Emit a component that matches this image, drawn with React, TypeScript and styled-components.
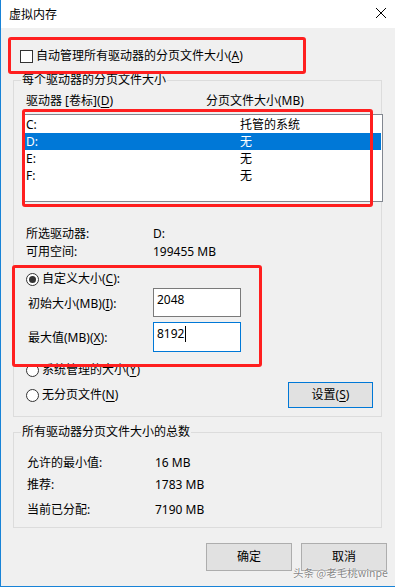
import React from "react";
import styled, { createGlobalStyle } from "styled-components";

const Global = createGlobalStyle`
  html, body { margin: 0; padding: 0; background: #ffffff; }
  body {
    font-family: "Noto Sans", "Noto Sans CJK SC", sans-serif;
    font-size: 12px;
    line-height: 16px;
    color: #000;
  }
  * { box-sizing: border-box; }
`;

const Window = styled.div`
  position: relative;
  width: 395px;
  height: 587px;
  border-left: 1px solid #1883d7;
  border-bottom: 1px solid #1883d7;
  background: #f0f0f0;
  display: flex;
  flex-direction: column;
  overflow: hidden;
`;

const TitleBar = styled.div`
  height: 28px;
  background: #fff;
  display: flex;
  align-items: center;
  justify-content: space-between;
  padding: 0 8px 0 8px;
  flex-shrink: 0;
`;

const Title = styled.span`
  font-family: "Noto Sans CJK SC", sans-serif;
  font-size: 12px;
  line-height: 16px;
`;

const Close = styled.svg`
  width: 12px;
  height: 12px;
  margin-top: -2px;
`;

const Body = styled.div`
  display: flex;
  flex-direction: column;
  padding: 20px 0 0 12px;
  flex: 1;
`;

const CheckRow = styled.label`
  display: flex;
  align-items: center;
  height: 16px;
  padding-left: 7px;
  gap: 3px;
`;

const CheckBox = styled.span`
  width: 13px;
  height: 13px;
  border: 1px solid #333;
  background: #fff;
  display: inline-block;
  flex-shrink: 0;
`;

const Group = styled.fieldset<{ $mt: number }>`
  margin: ${(p) => p.$mt}px 0 0 0;
  width: 369px;
  border: 1px solid #dcdcdc;
  padding: 0 8px 8px 8px;
  min-width: 0;
`;

const Legend = styled.legend`
  padding: 0 1px;
  margin-left: -1px;
  line-height: 16px;
  height: 16px;
`;

const HeaderRow = styled.div`
  display: grid;
  grid-template-columns: 180px 1fr;
  padding-left: 4px;
  margin-top: 5px;
  height: 16px;
`;

const ListBox = styled.div`
  margin: 5px 0 0 2px;
  width: 359px;
  height: 88px;
  border: 1px solid #828790;
  background: #fff;
  padding: 1px 1px 0 0;
`;

const ListRow = styled.div<{ $sel?: boolean }>`
  display: grid;
  grid-template-columns: 214px 1fr;
  height: 17px;
  align-items: center;
  padding-left: 1px;
  background: ${(p) => (p.$sel ? "#0078d7" : "transparent")};
  color: ${(p) => (p.$sel ? "#fff" : "#000")};
`;

const InfoRow = styled.div<{ $mt?: number; $pl?: number; $col?: number }>`
  display: grid;
  grid-template-columns: ${(p) => p.$col ?? 127}px 1fr;
  height: 18px;
  align-items: center;
  padding-left: ${(p) => p.$pl ?? 4}px;
  margin-top: ${(p) => p.$mt ?? 0}px;
`;

const RadioRow = styled.div<{ $mt?: number }>`
  display: flex;
  align-items: center;
  gap: 3px;
  height: 16px;
  padding-left: 4px;
  margin-top: ${(p) => p.$mt ?? 0}px;
`;

const Radio = styled.span<{ $on?: boolean }>`
  width: 13px;
  height: 13px;
  border-radius: 50%;
  border: 1px solid #333;
  background: #fff;
  display: inline-flex;
  align-items: center;
  justify-content: center;
  flex-shrink: 0;
  &::after {
    content: "";
    width: 7px;
    height: 7px;
    border-radius: 50%;
    background: ${(p) => (p.$on ? "#333" : "transparent")};
  }
`;

const FieldRow = styled.div<{ $mt?: number }>`
  display: grid;
  grid-template-columns: 125px 88px;
  align-items: center;
  padding-left: 6px;
  margin-top: ${(p) => p.$mt ?? 0}px;
`;

const FieldLabel = styled.span`
  margin-top: 2px;
`;

const TextBox = styled.div<{ $focus?: boolean; $h: number }>`
  height: ${(p) => p.$h}px;
  border: 1px solid ${(p) => (p.$focus ? "#0078d7" : "#7a7a7a")};
  background: #fff;
  padding: 3px 0 0 3px;
  display: flex;
  align-items: flex-start;
`;

const Caret = styled.span`
  display: inline-block;
  width: 1px;
  height: 16px;
  background: #000;
  margin-left: 1px;
`;

const BottomRow = styled.div`
  display: flex;
  align-items: center;
  justify-content: space-between;
  height: 26px;
  margin-top: 4px;
  padding-left: 4px;
`;

const RadioLabel = styled.div`
  display: flex;
  align-items: center;
  gap: 3px;
`;

const Button = styled.button<{ $default?: boolean; $w: number; $h: number }>`
  width: ${(p) => p.$w}px;
  height: ${(p) => p.$h}px;
  background: #e1e1e1;
  border: 1px solid ${(p) => (p.$default ? "#0078d7" : "#adadad")};
  font: inherit;
  color: #000;
  padding: 0;
  display: flex;
  align-items: center;
  justify-content: center;
`;

const ButtonRow = styled.div`
  display: flex;
  justify-content: flex-end;
  gap: 9px;
  margin-top: 15px;
  padding-right: 8px;
`;

const U = styled.span`
  text-decoration: underline;
  text-underline-offset: 2px;
`;

const RedBox = styled.div<{ $x: number; $y: number; $w: number; $h: number }>`
  position: absolute;
  left: ${(p) => p.$x}px;
  top: ${(p) => p.$y}px;
  width: ${(p) => p.$w}px;
  height: ${(p) => p.$h}px;
  border: 3px solid #ff1f1f;
  border-radius: 3px;
  pointer-events: none;
`;

const Watermark = styled.div`
  position: absolute;
  left: 292px;
  top: 566px;
  font-family: "Noto Sans CJK SC", sans-serif;
  font-size: 10.5px;
  line-height: 14px;
  color: rgba(90, 90, 90, 0.75);
  text-shadow: 0 0 2px #fff, 0 0 1px #fff;
  white-space: nowrap;
`;

export default function App() {
  return (
    <>
      <Global />
      <Window>
        <TitleBar>
          <Title>虚拟内存</Title>
          <Close viewBox="0 0 12 12">
            <path d="M1 1 L11 11 M11 1 L1 11" stroke="#000" strokeWidth="1" fill="none" />
          </Close>
        </TitleBar>
        <Body>
          <CheckRow>
            <CheckBox />
            <span>
              自动管理所有驱动器的分页文件大小(<U>A</U>)
            </span>
          </CheckRow>

          <Group $mt={8}>
            <Legend>每个驱动器的分页文件大小</Legend>
            <HeaderRow>
              <span>
                驱动器 [卷标](<U>D</U>)
              </span>
              <span>分页文件大小(MB)</span>
            </HeaderRow>
            <ListBox>
              <ListRow>
                <span>C:</span>
                <span>托管的系统</span>
              </ListRow>
              <ListRow $sel>
                <span>D:</span>
                <span>无</span>
              </ListRow>
              <ListRow>
                <span>E:</span>
                <span>无</span>
              </ListRow>
              <ListRow>
                <span>F:</span>
                <span>无</span>
              </ListRow>
            </ListBox>

            <InfoRow $mt={23}>
              <span>所选驱动器:</span>
              <span>D:</span>
            </InfoRow>
            <InfoRow>
              <span>可用空间:</span>
              <span>199455 MB</span>
            </InfoRow>

            <RadioRow $mt={10}>
              <Radio $on />
              <span>
                自定义大小(<U>C</U>):
              </span>
            </RadioRow>
            <FieldRow $mt={1}>
              <FieldLabel>
                初始大小(MB)(<U>I</U>):
              </FieldLabel>
              <TextBox $h={29}>2048</TextBox>
            </FieldRow>
            <FieldRow $mt={5}>
              <FieldLabel>
                最大值(MB)(<U>X</U>):
              </FieldLabel>
              <TextBox $h={30} $focus>
                8192
                <Caret />
              </TextBox>
            </FieldRow>
            <RadioRow $mt={10}>
              <Radio />
              <span>
                系统管理的大小(<U>Y</U>)
              </span>
            </RadioRow>
            <BottomRow>
              <RadioLabel>
                <Radio />
                <span>
                  无分页文件(<U>N</U>)
                </span>
              </RadioLabel>
              <Button $default $w={85} $h={26}>
                设置(<U>S</U>)
              </Button>
            </BottomRow>
          </Group>

          <Group $mt={7}>
            <Legend>所有驱动器分页文件大小的总数</Legend>
            <InfoRow $mt={14} $pl={5} $col={128}>
              <span>允许的最小值:</span>
              <span>16 MB</span>
            </InfoRow>
            <InfoRow $mt={4} $pl={5} $col={128}>
              <span>推荐:</span>
              <span>1783 MB</span>
            </InfoRow>
            <InfoRow $mt={7} $pl={5} $col={128}>
              <span>当前已分配:</span>
              <span>7190 MB</span>
            </InfoRow>
          </Group>

          <ButtonRow>
            <Button $w={86} $h={28}>确定</Button>
            <Button $w={86} $h={28}>取消</Button>
          </ButtonRow>
        </Body>

        <RedBox $x={7} $y={37} $w={298} $h={37} />
        <RedBox $x={21} $y={109} $w={351} $h={98} />
        <RedBox $x={11} $y={265} $w={250} $h={102} />
        <Watermark>头条 @老毛桃winpe</Watermark>
      </Window>
    </>
  );
}
